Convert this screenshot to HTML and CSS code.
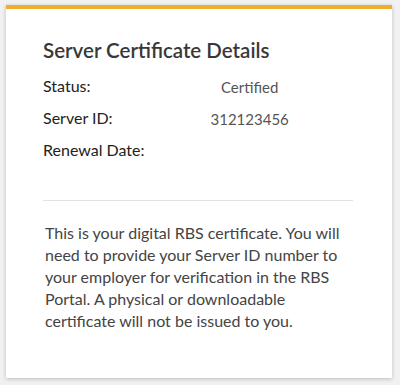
FILE: index.html
```html
<!DOCTYPE html>
<html>
<head>
<meta charset="utf-8">
<link rel="stylesheet" href="styles.css">
</head>
<body>
<div class="card">
  <h2 class="title">Server Certificate Details</h2>
  <div class="details">
    <div class="label">Status:</div><div class="value">Certified</div>
    <div class="label">Server ID:</div><div class="value">312123456</div>
    <div class="label">Renewal Date:</div><div class="value"></div>
  </div>
  <hr class="divider">
  <p class="note">This is your digital RBS certificate. You will need to provide your Server ID number to your employer for verification in the RBS Portal. A physical or downloadable certificate will not be issued to you.</p>
</div>
</body>
</html>
```
FILE: styles.css
```css
html, body {
  margin: 0;
  padding: 0;
}
body {
  background: #f1f1f1;
  font-family: Lato, "Open Sans", sans-serif;
  width: 400px;
  height: 385px;
  padding: 5px 8px 0 6px;
  box-sizing: border-box;
}
.card {
  background: #fff;
  border-top: 4px solid #eeae2e;
  box-shadow: 0 1px 4px rgba(0,0,0,0.22);
  height: 373px;
  box-sizing: border-box;
  padding: 28px 39px 0 37px;
}
.title {
  margin: 0;
  font-size: 20.5px;
  font-weight: 600;
  color: #383838;
  line-height: 26px;
}
.details {
  display: grid;
  grid-template-columns: 1fr 2fr;
  row-gap: 9px;
  margin-top: 12px;
  font-size: 16px;
  line-height: 21px;
}
.label {
  color: #222;
  white-space: nowrap;
}
.value {
  color: #555;
  text-align: center;
  font-size: 15px;
  padding-top: 2px;
}
.divider {
  border: 0;
  border-top: 1px solid #e2e2e2;
  margin: 40px 0 0 0;
}
.note {
  margin: 21px 0 0 2px;
  font-size: 16px;
  line-height: 22px;
  color: #444;
}
```
